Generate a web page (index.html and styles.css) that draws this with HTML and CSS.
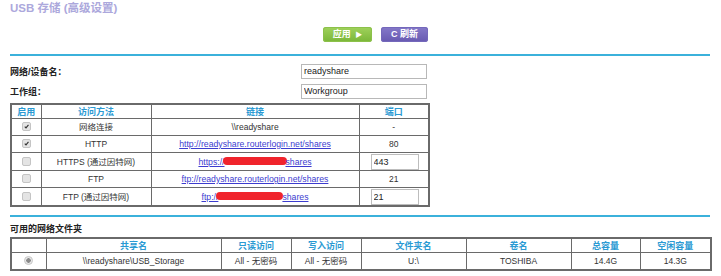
FILE: index.html
```html
<!DOCTYPE html>
<html lang="zh-CN">
<head>
<meta charset="utf-8">
<title>USB 存储 (高级设置)</title>
<link rel="stylesheet" href="styles.css">
</head>
<body>
<div class="page">
  <h1 class="title">USB 存储 (高级设置)</h1>
  <div class="actions">
    <button class="btn btn-apply">应用 <span class="tri">&#9654;</span></button>
    <button class="btn btn-refresh"><span class="ref">C</span> 刷新</button>
  </div>
  <div class="rule"></div>

  <div class="field first">
    <span class="label">网络/设备名：</span>
    <input class="txt" type="text" value="readyshare">
  </div>
  <div class="field">
    <span class="label">工作组：</span>
    <input class="txt" type="text" value="Workgroup">
  </div>

  <table class="grid g1">
    <colgroup><col class="c1"><col class="c2"><col class="c3"><col class="c4"></colgroup>
    <tr class="head"><th>启用</th><th>访问方法</th><th>链接</th><th>端口</th></tr>
    <tr><td><span class="cb on"><svg viewBox="0 0 10 10"><path d="M2.5 5.2 L4.3 7 L7.8 2.8" fill="none" stroke="#333" stroke-width="1.6"/></svg></span></td><td>网络连接</td><td>\\readyshare</td><td>-</td></tr>
    <tr><td><span class="cb on"><svg viewBox="0 0 10 10"><path d="M2.5 5.2 L4.3 7 L7.8 2.8" fill="none" stroke="#333" stroke-width="1.6"/></svg></span></td><td>HTTP</td><td><a href="#">http://readyshare.routerlogin.net/shares</a></td><td>80</td></tr>
    <tr class="tall"><td><span class="cb"></span></td><td>HTTPS (通过因特网)</td><td><a href="#">https://<span class="redact r1"></span>shares</a></td><td><input class="port" type="text" value="443"></td></tr>
    <tr><td><span class="cb"></span></td><td>FTP</td><td><a href="#">ftp://readyshare.routerlogin.net/shares</a></td><td>21</td></tr>
    <tr class="tall"><td><span class="cb"></span></td><td>FTP (通过因特网)</td><td><a href="#">ftp://<span class="redact r2"></span>shares</a></td><td><input class="port" type="text" value="21"></td></tr>
  </table>

  <div class="rule rule2"></div>
  <div class="subhead">可用的网络文件夹</div>

  <table class="grid g2">
    <colgroup><col class="d1"><col class="d2"><col class="d3"><col class="d4"><col class="d5"><col class="d6"><col class="d7"><col class="d8"></colgroup>
    <tr class="head"><th></th><th>共享名</th><th>只读访问</th><th>写入访问</th><th>文件夹名</th><th>卷名</th><th>总容量</th><th>空闲容量</th></tr>
    <tr><td><span class="radio"></span></td><td>\\readyshare\USB_Storage</td><td>All - 无密码</td><td>All - 无密码</td><td>U:\</td><td>TOSHIBA</td><td>14.4G</td><td>14.3G</td></tr>
  </table>
</div>
</body>
</html>
```

FILE: styles.css
```css
html, body {
  margin: 0;
  padding: 0;
  background: #ffffff;
}
body {
  font-family: "Liberation Sans", Arial, "Noto Sans CJK SC", sans-serif;
  font-size: 8.5px;
  color: #333333;
}
.page {
  width: 700px;
  padding: 0 0 0 10px;
}
.title {
  margin: 0;
  padding-top: 2px;
  height: 23px;
  font-size: 11.5px;
  line-height: 12px;
  font-weight: bold;
  color: #aca8dc;
}
.actions {
  width: 418px;
  display: flex;
  justify-content: flex-end;
  gap: 9px;
  height: 29px;
  align-items: flex-start;
  padding-top: 2px;
  box-sizing: border-box;
}
.btn {
  height: 15px;
  border: none;
  border-radius: 3px;
  color: #ffffff;
  font-family: "Liberation Sans", Arial, "Noto Sans CJK SC", sans-serif;
  font-size: 9px;
  font-weight: bold;
  line-height: 15px;
  padding: 0;
  box-sizing: border-box;
}
.btn-apply {
  width: 49px;
  background: linear-gradient(#a0d25c, #7ab638);
  box-shadow: inset 0 0 0 1px #8cc14a;
}
.btn-refresh {
  width: 47px;
  background: linear-gradient(#8579c9, #6759b1);
  box-shadow: inset 0 0 0 1px #7468bb;
}
.tri {
  font-size: 7px;
  margin-left: 2px;
}
.ref {
  font-size: 9px;
}
.rule {
  height: 2px;
  width: 700px;
  background: #3bb1db;
}
.field {
  width: 418px;
  display: flex;
  justify-content: space-between;
  align-items: center;
  height: 20px;
}
.field.first {
  margin-top: 5px;
}
.label {
  font-weight: bold;
  color: #222222;
  font-size: 9px;
}
.txt {
  width: 126px;
  height: 15px;
  box-sizing: border-box;
  border: 1px solid #b8b8b8;
  padding: 0 2px;
  font-family: "Liberation Sans", Arial, sans-serif;
  font-size: 9px;
  color: #222;
  margin-right: 1px;
}
.grid {
  border-collapse: collapse;
  table-layout: fixed;
  border: 2px solid #6a6a6a;
}
.grid th, .grid td {
  border: 1px solid #6a6a6a;
  text-align: center;
  padding: 0;
  white-space: nowrap;
  overflow: hidden;
}
.grid th {
  color: #2b9ad3;
  font-weight: bold;
  font-size: 9px;
  height: 13px;
  line-height: 12px;
}
.grid td {
  height: 16px;
  line-height: 14px;
}
.grid tr.tall td {
  height: 17px;
}
.g1 {
  width: 418px;
  margin-top: 2px;
}
.c1 { width: 30px; }
.c2 { width: 110px; }
.c3 { width: 208px; }
.c4 { width: 70px; }
.grid a {
  color: #3c3ccf;
  text-decoration: underline;
  font-size: 8.7px;
}
.redact {
  display: inline-block;
  height: 8px;
  background: #f0242c;
  border-radius: 5px;
  vertical-align: middle;
  margin-top: -2px;
}
.r1 { width: 64px; margin-left: -2px; margin-right: -1px; }
.r2 { width: 67px; margin-left: -2px; margin-right: -1px; }
.port {
  width: 48px;
  height: 16px;
  box-sizing: border-box;
  border: 1px solid #bdbdbd;
  padding: 0 2px;
  font-family: "Liberation Sans", Arial, sans-serif;
  font-size: 9px;
  color: #222;
  display: block;
  margin-left: 11px;
}
.cb {
  display: inline-block;
  width: 9px;
  height: 9px;
  box-sizing: border-box;
  border: 1px solid #c4c4c4;
  border-radius: 2px;
  background: #e4e4e4;
  vertical-align: middle;
  margin-top: -2px;
}
.cb svg {
  display: block;
  width: 7px;
  height: 7px;
}
.rule2 {
  margin-top: 8px;
}
.subhead {
  font-weight: bold;
  color: #222;
  font-size: 9px;
  height: 20px;
  line-height: 12px;
  padding-top: 6px;
  box-sizing: border-box;
}
.g2 {
  width: 700px;
}
.d1 { width: 35px; }
.d2 { width: 175px; }
.d3 { width: 70px; }
.d4 { width: 70px; }
.d5 { width: 105px; }
.d6 { width: 105px; }
.d7 { width: 69px; }
.d8 { width: 71px; }
.radio {
  display: inline-block;
  width: 9px;
  height: 9px;
  box-sizing: border-box;
  border-radius: 50%;
  border: 1px solid #c8c8c8;
  background: radial-gradient(circle, #8a8a8a 0 2px, #e8e8e8 2.5px);
  vertical-align: middle;
  margin-top: -2px;
}
```
